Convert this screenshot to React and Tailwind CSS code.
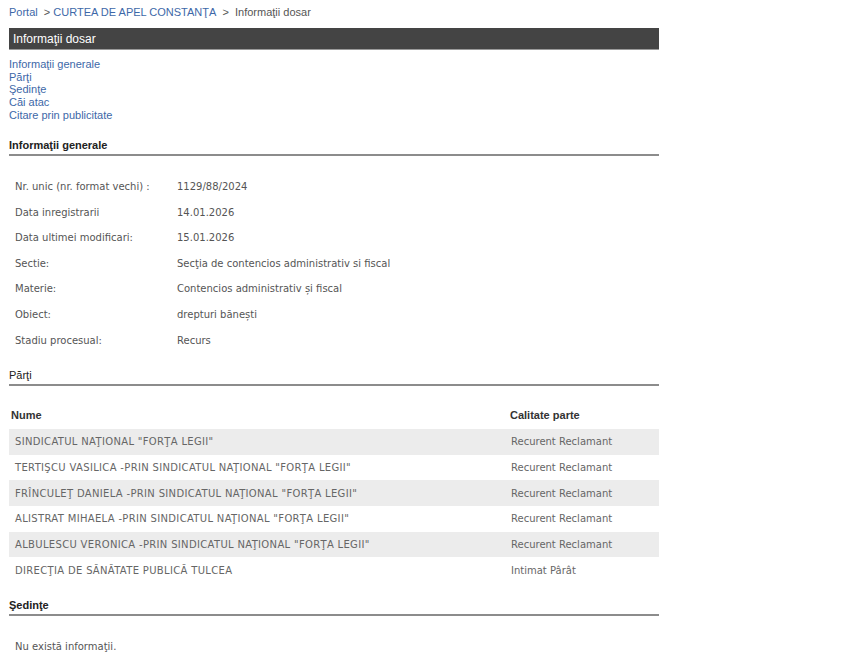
import React from "react";

const arial = { fontFamily: '"Liberation Sans", Arial, sans-serif' };
const dejavu = { fontFamily: '"DejaVu Sans", Verdana, sans-serif' };

const info = [
  ["Nr. unic (nr. format vechi) :", "1129/88/2024"],
  ["Data inregistrarii", "14.01.2026"],
  ["Data ultimei modificari:", "15.01.2026"],
  ["Sectie:", "Secţia de contencios administrativ si fiscal"],
  ["Materie:", "Contencios administrativ și fiscal"],
  ["Obiect:", "drepturi bănești"],
  ["Stadiu procesual:", "Recurs"],
];

const parti = [
  ['SINDICATUL NAŢIONAL "FORŢA LEGII"', "Recurent Reclamant"],
  ['TERTIŞCU VASILICA -PRIN SINDICATUL NAŢIONAL "FORŢA LEGII"', "Recurent Reclamant"],
  ['FRÎNCULEŢ DANIELA -PRIN SINDICATUL NAŢIONAL "FORŢA LEGII"', "Recurent Reclamant"],
  ['ALISTRAT MIHAELA -PRIN SINDICATUL NAŢIONAL "FORŢA LEGII"', "Recurent Reclamant"],
  ['ALBULESCU VERONICA -PRIN SINDICATUL NAŢIONAL "FORŢA LEGII"', "Recurent Reclamant"],
  ["DIRECŢIA DE SĂNĂTATE PUBLICĂ TULCEA", "Intimat Pârât"],
];

function SectionHeader({ children, bold = true }) {
  return (
    <div
      className={`h-[20px] border-b-2 border-[#8c8c8c] flex items-end pb-[2px] text-[11px] leading-[13px] text-[#222] ${bold ? "font-bold" : "font-normal"}`}
      style={arial}
    >
      {children}
    </div>
  );
}

export default function App() {
  return (
    <div className="w-[855px] h-[664px] bg-white overflow-hidden">
      <div className="ml-[9px] w-[650px]">
        {/* breadcrumb */}
        <div className="h-[28px] pt-[6px] text-[11px] leading-[13px] text-[#555]" style={arial}>
          <span className="text-[#3d68a8]">Portal</span>
          <span>&nbsp; &gt; </span>
          <span className="text-[#3d68a8]">CURTEA DE APEL CONSTANŢA</span>
          <span>&nbsp; &gt;&nbsp; Informaţii dosar</span>
        </div>
        {/* title bar */}
        <div
          className="h-[22px] bg-[#444444] border-b border-[#9a9a9a] flex items-center pl-[4px] text-[12px] text-white"
          style={arial}
        >
          Informaţii dosar
        </div>
        {/* links */}
        <div className="pt-[8px] flex flex-col text-[11px] leading-[12.7px] text-[#3d68a8]" style={arial}>
          <span>Informaţii generale</span>
          <span>Părţi</span>
          <span>Şedinţe</span>
          <span>Căi atac</span>
          <span>Citare prin publicitate</span>
        </div>
        {/* informatii generale */}
        <div className="mt-[14px]">
          <SectionHeader>Informaţii generale</SectionHeader>
        </div>
        <div className="mt-[18px] flex flex-col text-[10px] text-[#555]" style={dejavu}>
          {info.map(([k, v]) => (
            <div key={k} className="h-[25.67px] flex items-center">
              <div className="w-[168px] pl-[6px]">{k}</div>
              <div>{v}</div>
            </div>
          ))}
        </div>
        {/* parti */}
        <div className="mt-[13px]">
          <SectionHeader bold={false}>Părţi</SectionHeader>
        </div>
        <div className="mt-[15px]">
          <div className="h-[28px] flex items-center text-[11px] font-bold text-[#333]" style={arial}>
            <div className="w-[501px] pl-[2px]">Nume</div>
            <div>Calitate parte</div>
          </div>
          <div className="flex flex-col text-[10px] text-[#666]" style={dejavu}>
            {parti.map(([n, c], i) => (
              <div
                key={n}
                className={`h-[25.67px] flex items-center ${i % 2 === 0 ? "bg-[#ececec]" : "bg-white"}`}
              >
                <div className="w-[502px] pl-[6px] tracking-[0.33px]">{n}</div>
                <div>{c}</div>
              </div>
            ))}
          </div>
        </div>
        {/* sedinte */}
        <div className="mt-[13px]">
          <SectionHeader>Şedinţe</SectionHeader>
        </div>
        <div className="mt-[23px] pl-[6px] text-[10px] text-[#555]" style={dejavu}>
          Nu există informaţii.
        </div>
      </div>
    </div>
  );
}
